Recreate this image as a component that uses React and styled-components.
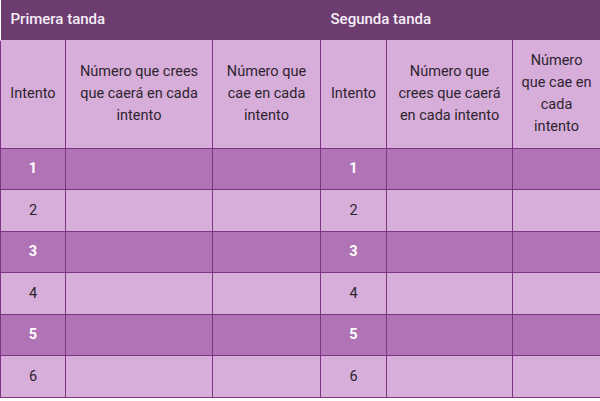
import React from 'react';
import styled, { createGlobalStyle } from 'styled-components';

const GlobalStyle = createGlobalStyle`
  body {
    margin: 0;
    background: #fff;
    font-family: Roboto, "Liberation Sans", sans-serif;
  }
`;

const Table = styled.table`
  width: 600px;
  table-layout: fixed;
  border-collapse: collapse;
  font-size: 14.5px;
  color: #2e2430;
`;

const BandRow = styled.tr`
  background: #6d3c70;
  height: 40px;

  th {
    color: #f6eef7;
    font-size: 15px;
    font-weight: 500;
    text-align: left;
    padding: 0 10px 2px;
  }
`;

const HeadRow = styled.tr`
  background: #d7aed9;
  height: 108px;

  th {
    font-weight: 400;
    line-height: 22px;
    padding: 0 6px;
    border: 1px solid #7d3581;
    border-top-color: #d7aed9;
    text-align: center;
    vertical-align: middle;
  }
`;

const Row = styled.tr`
  height: 41.5px;
  background: ${p => (p.$dark ? '#b073b5' : '#d7aed9')};

  td {
    border: 1px solid #7d3581;
    text-align: center;
    color: ${p => (p.$dark ? '#fff' : '#2e2430')};
    font-weight: ${p => (p.$dark ? 700 : 400)};
  }
`;

const widths = [65, 147, 108, 66, 126, 88];

const headers = [
  'Intento',
  'Número que crees que caerá en cada intento',
  'Número que cae en cada intento',
];

export default function App() {
  const rows = [1, 2, 3, 4, 5, 6];
  return (
    <>
      <GlobalStyle />
      <Table>
        <colgroup>
          {widths.map((w, i) => (
            <col key={i} style={{ width: w }} />
          ))}
        </colgroup>
        <thead>
          <BandRow>
            <th colSpan={3}>Primera tanda</th>
            <th colSpan={3}>Segunda tanda</th>
          </BandRow>
          <HeadRow>
            {[...headers, ...headers].map((h, i) => (
              <th key={i}>{h}</th>
            ))}
          </HeadRow>
        </thead>
        <tbody>
          {rows.map(n => (
            <Row key={n} $dark={n % 2 === 1}>
              <td>{n}</td>
              <td />
              <td />
              <td>{n}</td>
              <td />
              <td />
            </Row>
          ))}
        </tbody>
      </Table>
    </>
  );
}
